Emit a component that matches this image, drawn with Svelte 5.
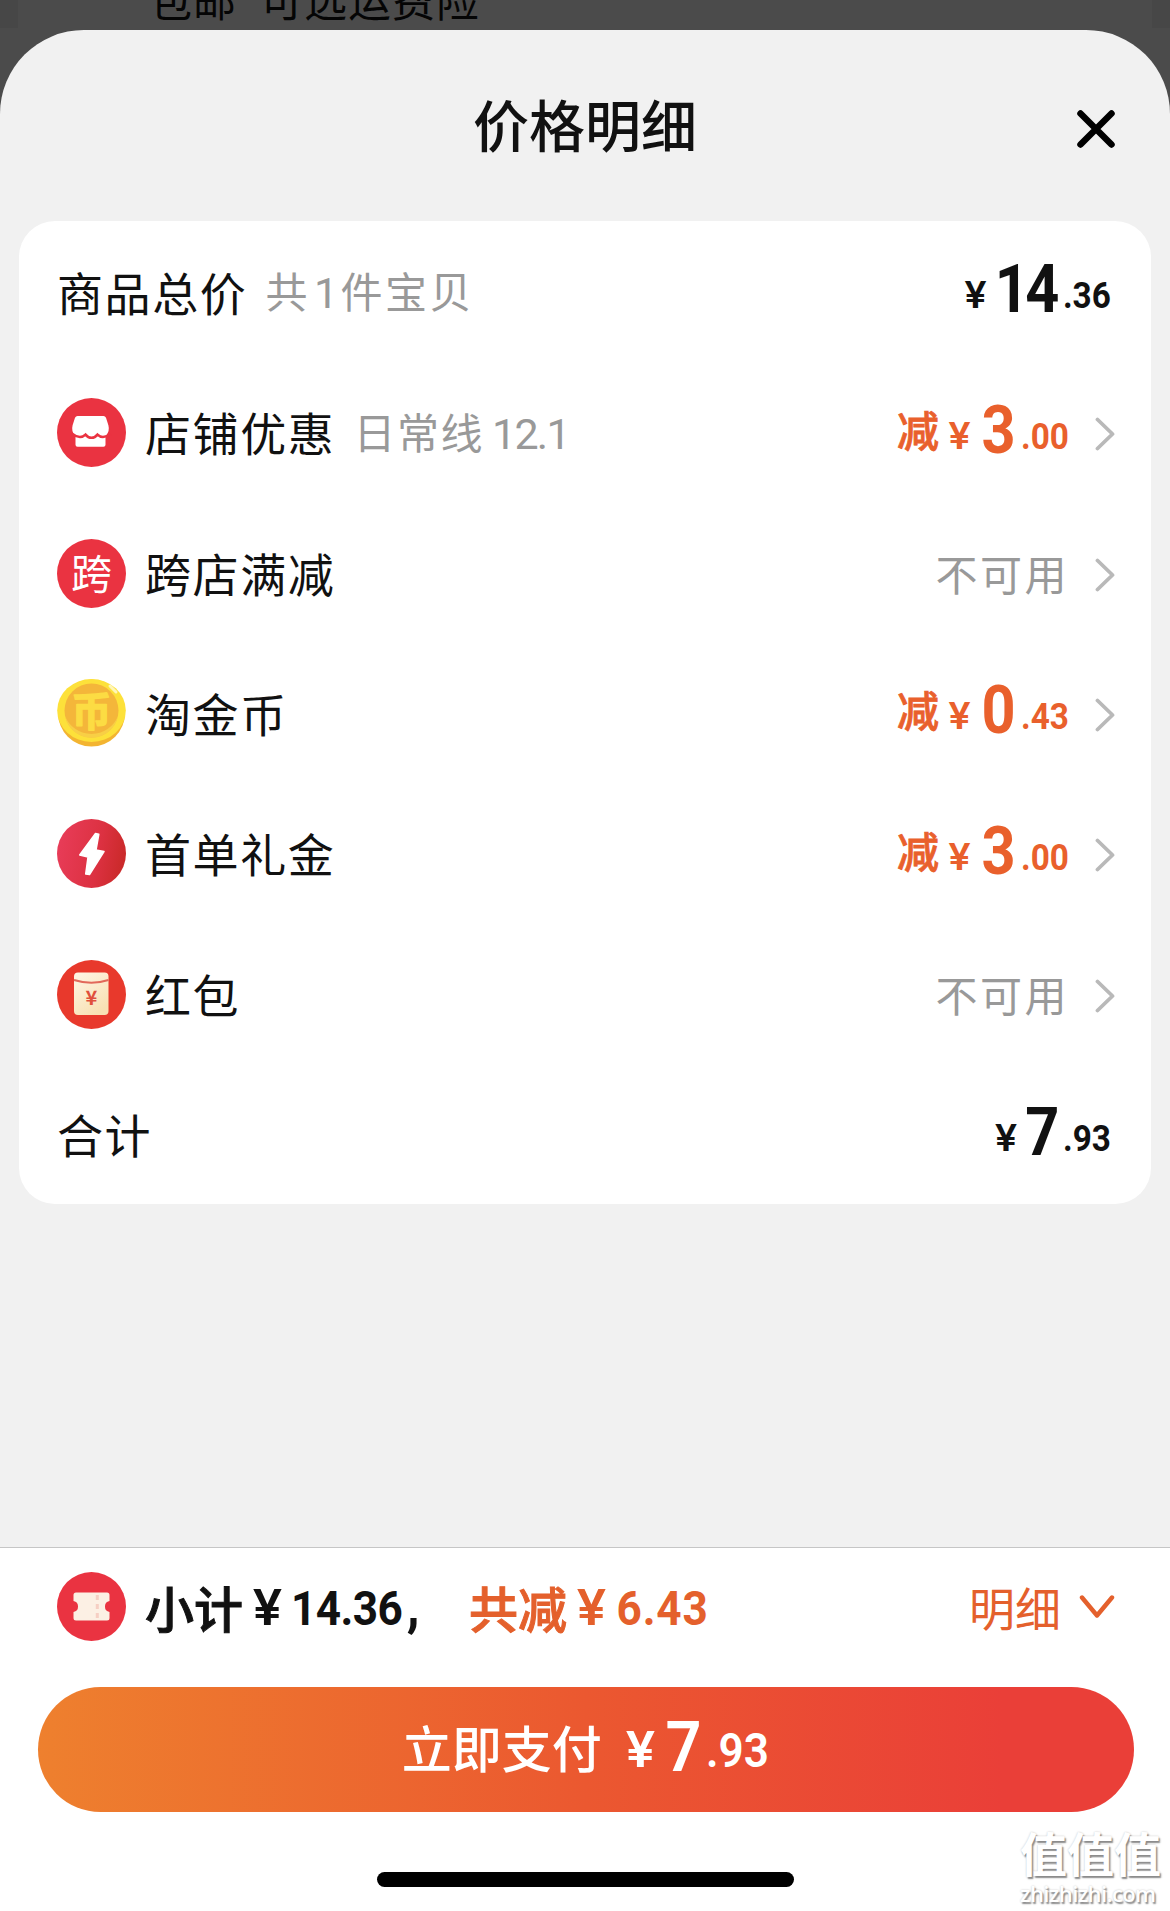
<script>
  const total = { yuan: "14", cents: ".36" };
  const payable = { yuan: "7", cents: ".93" };

  const discounts = [
    { icon: "shop", name: "店铺优惠", note: "日常线", date: "12.1", yuan: "3", cents: ".00" },
    { icon: "cross", name: "跨店满减" },
    { icon: "coin", name: "淘金币", yuan: "0", cents: ".43" },
    { icon: "bolt", name: "首单礼金", yuan: "3", cents: ".00" },
    { icon: "packet", name: "红包" }
  ];
</script>

{#snippet price(value)}
  <span class="price">
    <span class="yen">¥</span><span class="yuan">{value.yuan}</span><span class="cents">{value.cents}</span>
  </span>
{/snippet}

{#snippet badge(kind)}
  <svg class="badge" viewBox="0 0 69 69" aria-hidden="true">
    {#if kind === "shop"}
      <circle cx="34.5" cy="34.5" r="34.5" fill="#ea3341" />
      <path
        d="M22.5 18h24q1.700 0 2.500 1.800l2.400 7.500q1.400 5.700-2 9.700l-.9 1v8.700q0 2-2 2h-26q-2 0-2-2v-8.700l-.9-1q-3.400-4-2-9.700l2.400-7.500q.8-1.800 2.500-1.800z"
        fill="#fff"
      />
      <path
        d="M15.500 36q3.500 3 7.500 3q3 0 5.500-2.400q2.500 3.200 6 3.200t6-3.200q2.500 2.400 5.500 2.400q4 0 7.500-3"
        fill="none"
        stroke="#ea3341"
        stroke-width="2.6"
      />
    {:else if kind === "cross"}
      <circle cx="34.5" cy="34.5" r="34.5" fill="#ea3341" />
      <text x="34.5" y="49.5" text-anchor="middle" font-size="41" fill="#fff">跨</text>
    {:else if kind === "coin"}
      <circle cx="34.5" cy="34" r="33.5" fill="#f3b431" />
      <ellipse cx="34.5" cy="31.5" rx="34.3" ry="31.5" fill="#fde13a" />
      <circle cx="34.5" cy="31.5" r="27" fill="#f4b63a" />
      <path d="M8 37a27 27 0 0 0 53 0a28.500 28.500 0 0 1-53 0z" fill="#f8cf45" />
      <path d="M53 7l6 6" stroke="#fff6b8" stroke-width="3" stroke-linecap="round" />
      <text
        x="34.5"
        y="46.5"
        text-anchor="middle"
        font-size="40"
        font-weight="700"
        fill="#fcdc43"
        stroke="#fcdc43"
        stroke-width="1.4"
        stroke-linejoin="round">币</text
      >
    {:else if kind === "bolt"}
      <defs>
        <linearGradient id="bolt-bg" x1="0" y1="0.4" x2="1" y2="0.6">
          <stop offset="0" stop-color="#e83c58" />
          <stop offset="0.6" stop-color="#dc3141" />
          <stop offset="1" stop-color="#c92928" />
        </linearGradient>
      </defs>
      <circle cx="34.5" cy="34.5" r="34.5" fill="url(#bolt-bg)" />
      <path
        d="M38.500 14.500l3.300.8-2.800 15.700 8 1.500-14.500 23-3.800-.5 2.300-17-8.300-2z"
        fill="#fff"
        stroke="#fff"
        stroke-width="1.5"
        stroke-linejoin="round"
      />
    {:else if kind === "packet"}
      <defs>
        <linearGradient id="packet-bg" x1="0" y1="0" x2="0.6" y2="1">
          <stop offset="0" stop-color="#fff6e6" />
          <stop offset="1" stop-color="#f8e1b4" />
        </linearGradient>
      </defs>
      <circle cx="34.5" cy="34.5" r="34.5" fill="#e8392c" />
      <rect x="17" y="12.5" width="34.5" height="42.5" rx="4" fill="url(#packet-bg)" />
      <path d="M17 20q17.500 5.500 34.500 0" fill="none" stroke="#e2695a" stroke-width="2" />
      <text x="34.3" y="44.5" text-anchor="middle" font-size="20" font-weight="700" fill="#e0503c">¥</text>
    {:else}
      <circle cx="34.5" cy="34.5" r="34.5" fill="#ea3341" />
      <path
        d="M19 20.500h31q2.500 0 2.500 2.500v6a5.600 5.600 0 0 0 0 11v6q0 2.500-2.500 2.500h-31q-2.500 0-2.500-2.500v-6a5.600 5.600 0 0 0 0-11v-6q0-2.500 2.500-2.500z"
        fill="#fcf0e4"
      />
      <path d="M40.300 23v5m0 4v5m0 4v5" stroke="#f6cfc3" stroke-width="3" />
    {/if}
  </svg>
{/snippet}

<div class="screen">
  <div class="backdrop">包邮<span>可选运费险</span></div>

  <section class="sheet">
    <header>
      <h1>价格明细</h1>
      <button class="close" aria-label="关闭">
        <svg width="38" height="38" viewBox="0 0 38 38">
          <path d="M3.500 3.500l31 31m0-31l-31 31" stroke="#000" stroke-width="6.5" stroke-linecap="round" />
        </svg>
      </button>
    </header>

    <div class="card">
      <div class="row">
        <span class="label">商品总价</span>
        <span class="note count">共<span class="num">1</span>件宝贝</span>
        <span class="value">{@render price(total)}</span>
      </div>

      {#each discounts as item}
        <div class="row">
          {@render badge(item.icon)}
          <span class="label">{item.name}</span>
          {#if item.note}
            <span class="note">{item.note}<span class="num">{item.date}</span></span>
          {/if}
          <span class="value">
            {#if item.yuan}
              <span class="minus"><span class="cut">减</span>{@render price(item)}</span>
            {:else}
              <span class="unavailable">不可用</span>
            {/if}
            <svg class="chevron" width="20" height="34" viewBox="0 0 20 34">
              <path
                d="M2.500 2.500L17.500 17L2.500 31.500"
                fill="none"
                stroke="#b9b9b9"
                stroke-width="3.8"
                stroke-linecap="round"
                stroke-linejoin="round"
              />
            </svg>
          </span>
        </div>
      {/each}

      <div class="row">
        <span class="label">合计</span>
        <span class="value">{@render price(payable)}</span>
      </div>
    </div>
  </section>

  <footer>
    <div class="summary">
      {@render badge("ticket")}
      <span class="subtotal">小计</span>
      <span class="sum"><span class="yen">¥</span>14.36<span class="comma">,</span></span>
      <span class="saved">共减</span>
      <span class="sum orange"><span class="yen">¥</span>6.43</span>
      <span class="detail">
        明细
        <svg width="36" height="24" viewBox="0 0 36 24">
          <path
            d="M3 2.500L18 20.500L33 2.500"
            fill="none"
            stroke="#e4602c"
            stroke-width="4.4"
            stroke-linecap="round"
            stroke-linejoin="round"
          />
        </svg>
      </span>
    </div>
    <button class="pay"><span class="pay-label">立即支付</span>{@render price(payable)}</button>
    <div class="home-bar"></div>
  </footer>

  <div class="watermark">
    <strong>值值值</strong>
    <span>zhizhizhi.com</span>
  </div>
</div>

<style>
  :global(body) {
    margin: 0;
  }

  .screen {
    position: relative;
    display: flex;
    flex-direction: column;
    width: 1170px;
    height: 1911px;
    overflow: hidden;
    background: #4b4b4b;
    color: #111;
    font-family: "Noto Sans CJK SC", "Noto Sans", sans-serif;
  }

  button {
    padding: 0;
    border: 0;
    background: none;
    font: inherit;
    color: inherit;
  }

  svg {
    display: block;
    flex-shrink: 0;
  }

  .backdrop {
    height: 30px;
    box-sizing: border-box;
    padding-left: 131px;
    border: solid #474747;
    border-width: 0 18px;
    font-size: 43px;
    line-height: 0;
    letter-spacing: 1px;
    color: #050505;
    transform: translateY(-2px);
    box-shadow: 0 2px #4b4b4b;
  }

  .backdrop span {
    margin-left: 23px;
  }

  .sheet {
    flex: 1;
    padding: 0 19px;
    border-radius: 84px 84px 0 0;
    background: #f1f1f1;
  }

  header {
    display: grid;
    grid-template-columns: 1fr auto 1fr;
    align-items: center;
    height: 191px;
    padding-right: 36px;
    padding-left: 36px;
  }

  h1 {
    grid-column: 2;
    margin: 0 0 5px;
    font-size: 56px;
    font-weight: 500;
    line-height: 1;
  }

  .close {
    justify-self: end;
    margin-top: 6px;
  }

  .card {
    display: grid;
    grid-template-rows: repeat(7, 1fr);
    height: 983px;
    border-radius: 36px;
    background: #fff;
  }

  .row {
    display: flex;
    align-items: center;
    padding: 2px 36px 0 38px;
    line-height: 1;
  }

  .badge {
    width: 69px;
    height: 69px;
    margin-right: 19px;
  }

  .label {
    margin-bottom: 3px;
    font-size: 46px;
    letter-spacing: 1.6px;
  }

  .note {
    margin-left: 18px;
    font-size: 42px;
    letter-spacing: 1.5px;
    color: #999;
  }

  .count {
    letter-spacing: 2.5px;
  }

  .num {
    margin-left: 8px;
    font-family: Roboto, sans-serif;
    font-size: 43px;
    letter-spacing: -1.7px;
  }

  .count .num {
    margin: 0 4px;
  }

  .value {
    display: flex;
    align-items: center;
    margin-left: auto;
  }

  .price {
    display: flex;
    align-items: baseline;
    margin: 0 4px 4px 0;
    font-family: Roboto, sans-serif;
    font-size: 37px;
    font-weight: 700;
    transform: scaleX(0.9);
    transform-origin: right;
  }

  .yen {
    display: inline-block;
    font-family: Inter, sans-serif;
    font-weight: 600;
    transform: scaleX(1.2);
  }

  .price .yen {
    transform: translateY(-4px) scaleX(1.2);
  }

  .price .cents {
    transform: translateY(-4px);
  }

  .yuan {
    margin: 0 8px 0 11px;
    font-size: 66px;
    letter-spacing: -4px;
  }

  .minus {
    display: flex;
    align-items: baseline;
    color: #e9602c;
  }

  .minus .price {
    margin-right: 0;
  }

  .minus .yuan {
    margin: 0 10px 0 14px;
  }

  .cut {
    margin-right: -2px;
    font-size: 42px;
    font-weight: 500;
    -webkit-text-stroke: 0.8px;
    transform: translateY(-6px);
  }

  .unavailable {
    font-size: 42px;
    letter-spacing: 2.5px;
    color: #999;
  }

  .chevron {
    margin: 3px 0 0 26px;
  }

  footer {
    height: 363px;
    border-top: 1px solid #c6c6c6;
    background: #fff;
  }

  .summary {
    display: flex;
    align-items: center;
    height: 117px;
    padding: 0 55px 0 57px;
    font-size: 49px;
    font-weight: 700;
    line-height: 1;
  }

  .subtotal,
  .saved {
    font-weight: 500;
    -webkit-text-stroke: 1px;
  }

  .sum {
    width: 204px;
    margin: 2px 0 0 12px;
    font-family: Roboto, sans-serif;
    letter-spacing: -0.6px;
    transform: scaleX(0.9);
    transform-origin: left;
  }

  .sum .yen {
    margin-right: 13px;
  }

  .comma {
    margin-left: 5px;
    font-size: 58px;
    line-height: 0;
  }

  .saved {
    margin-left: 10px;
    color: #e4602c;
  }

  .orange {
    letter-spacing: 1px;
    color: #e4602c;
  }

  .detail {
    display: flex;
    align-items: center;
    gap: 18px;
    margin-left: auto;
    margin-bottom: 2px;
    font-size: 46px;
    font-weight: 400;
    color: #e4602c;
  }

  .detail svg {
    margin-top: 3px;
  }

  .pay {
    display: flex;
    align-items: baseline;
    justify-content: center;
    width: 1096px;
    height: 125px;
    margin: 22px 0 0 38px;
    border-radius: 63px;
    background: linear-gradient(90deg, #ee802e, #eb5830 50%, #ea3f38 88%);
    color: #fff;
    font-size: 50px;
    font-weight: 500;
    line-height: 120px;
  }

  .pay-label {
    transform: translateY(-3px);
  }

  .pay .price {
    margin: 0 -14px 0 26px;
    font-size: 49px;
    font-weight: 600;
    transform-origin: left;
  }

  .pay .yuan {
    margin: 0 9px 0 14px;
    font-size: 70px;
  }

  .home-bar {
    width: 417px;
    height: 15px;
    margin: 60px auto 0;
    border-radius: 8px;
    background: #000;
  }

  .watermark {
    position: absolute;
    right: 9px;
    bottom: 6px;
    display: flex;
    flex-direction: column;
    gap: 6px;
    color: #fff;
    line-height: 1;
    text-shadow: 1.5px 1.5px 1.5px #8a8a8a, 0 0 2px #c4c4c4;
  }

  .watermark strong {
    font-size: 47px;
  }

  .watermark span {
    font-family: "Open Sans", sans-serif;
    font-size: 22px;
    font-weight: 600;
    line-height: 24px;
    letter-spacing: -0.6px;
  }
</style>
